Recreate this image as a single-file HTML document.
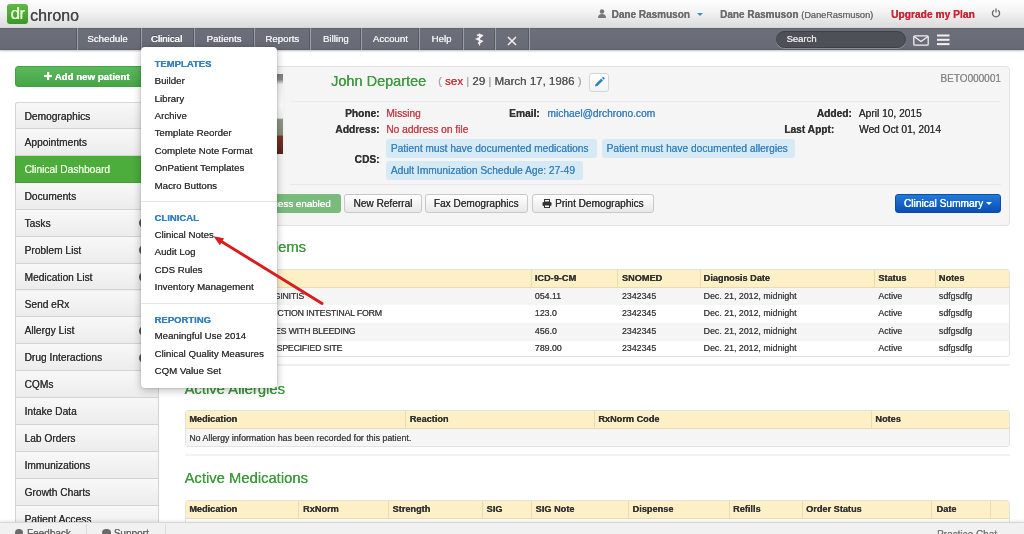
<!DOCTYPE html>
<html><head><meta charset="utf-8">
<style>
*{margin:0;padding:0;box-sizing:border-box}
html,body{width:1024px;height:534px;overflow:hidden;background:#fff;font-family:"Liberation Sans",sans-serif;color:#333;position:relative}
.a{position:absolute;white-space:nowrap}
.a>svg{display:block}
#wrap *{text-shadow:0.2px 0 0 currentColor}
#hdr{left:0;top:0;width:1024px;height:28px;background:linear-gradient(#fefefe,#f4f4f4 40%,#dadada)}
#logo{left:7px;top:3.6px;width:21px;height:20.8px;border-radius:3px;background:linear-gradient(#62b845,#3c962a);color:#e4ffd0;font-size:17px;line-height:19px;text-align:center;letter-spacing:-0.5px}
#chrono{left:30px;top:3.5px;font-size:16px;color:#454545;line-height:24px}
#nav{left:0;top:28px;width:1024px;height:21.5px;background:linear-gradient(#5e6069,#6c6f79 8%,#686b75 92%,#5a5c65);box-shadow:0 1px 2px rgba(0,0,0,.25)}
.sep{top:28px;width:2px;height:21.5px;border-left:1px solid #585a63;border-right:1px solid #9c9ea5}
.tab{top:28px;height:21.5px;line-height:22.4px;color:#eef0f4;font-size:9.7px;text-align:center;text-shadow:0 -1px 0 rgba(0,0,0,.3)}
.hr{top:8.7px;font-size:10px;color:#555;line-height:12px}
#side{left:14.5px;top:101.9px;width:144px;height:420px}
.si{position:absolute;left:0;width:144px;height:26.9px;border:1px solid #d3d3d3;border-top:none;background:linear-gradient(#f8f8f8,#ececec);font-size:10.2px;line-height:28.2px;padding-left:9px;color:#333}
.si.act{background:#4cac3c;color:#eaf7dd;border-color:#4a9a3c}

.dd{z-index:10;left:141px;top:46.7px;width:136.3px;height:341px;background:#fff;border-radius:4px;box-shadow:0 2px 8px rgba(0,0,0,.28),0 0 0 1px rgba(0,0,0,.06)}
.dh{z-index:11;font-size:9.5px;font-weight:bold;color:#3380c2;left:154.5px;line-height:11px}
.di{z-index:11;font-size:9.7px;color:#383838;left:154.5px;line-height:11px}
.dsep{z-index:11;left:141px;width:136px;height:1px;background:#e6e6e6}
#card{left:184.5px;top:66px;width:825px;height:159.5px;background:#f5f5f5;border:1px solid #e3e3e3;border-radius:4px}
.lb{font-size:10.2px;font-weight:bold;color:#333;text-align:right;line-height:12px}
.vl{font-size:10.2px;line-height:12px}
.cds{background:#d6eaf6;color:#3c84bd;font-size:10.2px;line-height:19px;height:19px;border-radius:3px;padding-left:5px}
.btn{top:194.2px;height:19px;border:1px solid #c8c8c8;border-radius:3px;background:linear-gradient(#fff,#e8e8e8);font-size:10.1px;line-height:18.6px;text-align:center;color:#333}
.sh{font-size:14.8px;color:#3d9a3d;line-height:16px}
.tb{left:184.5px;width:825px;border:1px solid #e2e2e2;border-radius:3px;background:#fff;overflow:hidden}
.th{position:absolute;left:0;top:0;width:100%;height:18px;background:#fdefc6;border-bottom:1px solid #eadcb0}
.tc{font-size:9.2px;font-weight:bold;color:#333;line-height:18px}
.tv{font-size:8.8px;color:#444;line-height:17.6px}
.vs{width:1px;background:#eadcb0}
</style></head><body><div id="wrap" style="position:absolute;left:0;top:0;width:1024px;height:534px;will-change:transform">
<div id="hdr" class="a"></div>
<div id="logo" class="a">dr</div>
<div id="chrono" class="a">chrono</div>
<div class="a hr" style="left:598px;top:9px;width:8px;height:9px">
<svg width="8" height="9" viewBox="0 0 8 9"><circle cx="4" cy="2.5" r="2.2" fill="#777"/><path d="M0 9 Q0 5 4 5 Q8 5 8 9Z" fill="#777"/></svg></div>
<div class="a hr" style="left:611.5px;font-weight:bold;color:#6c6c6c">Dane Rasmuson</div>
<div class="a" style="left:696.5px;top:12.5px;width:0;height:0;border-left:3px solid transparent;border-right:3px solid transparent;border-top:3px solid #3d8fc8"></div>
<div class="a hr" style="left:720px;font-weight:bold;color:#6c6c6c">Dane Rasmuson <span style="font-size:9.2px;font-weight:normal">(DaneRasmuson)</span></div>
<div class="a hr" style="left:891px;top:9px;font-size:10.25px;font-weight:bold;color:#cc2535">Upgrade my Plan</div>
<div class="a" style="left:991px;top:8px"><svg width="10" height="10" viewBox="0 0 10 10"><path d="M3 2.3 A3.6 3.6 0 1 0 7 2.3" fill="none" stroke="#666" stroke-width="1.3"/><line x1="5" y1="0.5" x2="5" y2="4.5" stroke="#666" stroke-width="1.3"/></svg></div>

<div id="nav" class="a"></div>
<div class="a sep" style="left:75.5px"></div>
<div class="a sep" style="left:139.5px"></div>
<div class="a sep" style="left:193px"></div>
<div class="a sep" style="left:252.5px"></div>
<div class="a sep" style="left:309px"></div>
<div class="a sep" style="left:359.7px"></div>
<div class="a sep" style="left:418px"></div>
<div class="a sep" style="left:462px"></div>
<div class="a sep" style="left:494.4px"></div>
<div class="a sep" style="left:527.8px"></div>
<div class="a tab" style="left:76px;width:63px">Schedule</div>
<div class="a tab" style="left:140.2px;width:52.5px;color:#fff;text-shadow:0.35px 0 0 #fff,0 -1px 0 rgba(0,0,0,.3)">Clinical</div>
<div class="a tab" style="left:195px;width:58px">Patients</div>
<div class="a tab" style="left:254.5px;width:55.5px">Reports</div>
<div class="a tab" style="left:311px;width:49.7px">Billing</div>
<div class="a tab" style="left:361.7px;width:57.3px">Account</div>
<div class="a tab" style="left:420px;width:43px">Help</div>


<div class="a" style="left:14.8px;top:65.6px;width:143.5px;height:21.5px;border-radius:3px;background:linear-gradient(#5cb85c,#47a447);border:1px solid #43a043;color:#fff;font-size:9.7px;font-weight:bold;line-height:19.5px;padding-left:28.5px"><svg width="8" height="8" viewBox="0 0 8 8" style="display:inline-block;vertical-align:-0.5px;margin-right:0"><rect x="3" y="0" width="2.2" height="8" fill="#fff"/><rect x="0" y="2.9" width="8" height="2.2" fill="#fff"/></svg> Add new patient</div>
<svg class="a" style="left:475px;top:32.5px" width="9" height="13" viewBox="0 0 9 13"><path d="M4.5 0.5 V12.5" stroke="#eee" stroke-width="1.3"/><path d="M2 2.5 Q4.5 1.2 7 2.6 Q4.5 5 2 6 Q4.5 7.2 7 8.2 Q5 9.8 3 10.3" fill="none" stroke="#f2f2f2" stroke-width="1.7"/></svg>
<svg class="a" style="left:507px;top:35.5px" width="10" height="10" viewBox="0 0 10 10"><path d="M1 1 L9 9 M9 1 L1 9" stroke="#f0f0f0" stroke-width="1.6"/></svg>
<div class="a" style="left:775.5px;top:31px;width:130px;height:16.5px;border-radius:9px;background:#4e5058;border:1px solid #3e4046;box-shadow:0 1px 0 rgba(255,255,255,.25);color:#e6e6e6;font-size:9.5px;line-height:14.5px;padding-left:10px">Search</div>
<svg class="a" style="left:913px;top:35px" width="16" height="11" viewBox="0 0 16 11"><rect x="0.8" y="0.8" width="14.4" height="9.4" rx="1" fill="none" stroke="#f0f0f0" stroke-width="1.3"/><path d="M1 1.5 L8 6.5 L15 1.5" fill="none" stroke="#f0f0f0" stroke-width="1.3"/></svg>
<svg class="a" style="left:937px;top:34px" width="13" height="12" viewBox="0 0 13 12"><rect x="0" y="0.5" width="12.5" height="2" fill="#f0f0f0"/><rect x="0" y="4.8" width="12.5" height="2" fill="#f0f0f0"/><rect x="0" y="9.1" width="12.5" height="2" fill="#f0f0f0"/></svg>
<div id="side" class="a">
<div class="a" style="left:0;top:0;width:144px;height:432px;border:1px solid #d3d3d3;border-radius:3px;background:#eee"></div>
<div class="si" style="top:0px;border-top:1px solid #d8d8d8;border-radius:3px 3px 0 0;line-height:27.2px">Demographics</div>
<div class="si" style="top:26.95px">Appointments</div>
<div class="si act" style="top:53.90px">Clinical Dashboard</div>
<div class="si" style="top:80.85px">Documents</div>
<div class="si" style="top:107.80px">Tasks</div>
<div class="a" style="left:124px;top:116.10px;width:16px;height:10px;border-radius:5px;background:#555"></div>
<div class="si" style="top:134.75px">Problem List</div>
<div class="a" style="left:124px;top:143.05px;width:16px;height:10px;border-radius:5px;background:#555"></div>
<div class="si" style="top:161.70px">Medication List</div>
<div class="a" style="left:124px;top:170.00px;width:16px;height:10px;border-radius:5px;background:#555"></div>
<div class="si" style="top:188.65px">Send eRx</div>
<div class="si" style="top:215.60px">Allergy List</div>
<div class="a" style="left:124px;top:223.90px;width:16px;height:10px;border-radius:5px;background:#555"></div>
<div class="si" style="top:242.55px">Drug Interactions</div>
<div class="a" style="left:124px;top:250.85px;width:16px;height:10px;border-radius:5px;background:#555"></div>
<div class="si" style="top:269.50px">CQMs</div>
<div class="si" style="top:296.45px">Intake Data</div>
<div class="si" style="top:323.40px">Lab Orders</div>
<div class="si" style="top:350.35px">Immunizations</div>
<div class="si" style="top:377.30px">Growth Charts</div>
<div class="si" style="top:404.25px">Patient Access</div>
</div>


<div id="card" class="a"></div>
<div class="a" style="left:203px;top:74px;width:79.8px;height:80.3px;background:linear-gradient(#7c7c7c 0,#8a8a8a 7%,#f4f4f4 13%,#fff 40%,#f2f2f2 55%,#8f9585 57%,#868c7b 76%,#7a3428 78%,#5c2219 100%)"></div>
<div class="a" style="left:290px;top:101px;width:711px;height:1px;background:#ececec"></div>
<div class="a" style="left:290px;top:184px;width:711px;height:1px;background:#e8e8e8"></div>
<div class="a sh" style="left:331px;top:73px;font-size:14.5px;line-height:16px">John Departee</div>
<div class="a" style="left:438px;top:75px;font-size:11.5px;color:#555;line-height:13px"><span style="color:#aaa">(</span> <span style="color:#c7353a">sex</span> <span style="color:#aaa">|</span> 29 <span style="color:#aaa">|</span> March 17, 1986 <span style="color:#aaa">)</span></div>
<div class="a" style="left:588.7px;top:73.3px;width:20px;height:18.8px;border:1px solid #d6d6d6;border-radius:3px;background:linear-gradient(#fff,#f3f3f3)"><svg width="18" height="17" viewBox="0 0 18 17" style="position:absolute;left:0;top:0"><path d="M5 12.5 L5.6 10.2 L11.2 4.6 L13 6.4 L7.4 12 Z" fill="#2d86c4"/><path d="M11.9 3.9 L12.7 3.1 Q13.2 2.7 13.7 3.1 L14.5 3.9 Q14.9 4.4 14.5 4.9 L13.7 5.7 Z" fill="#2d86c4"/></svg></div>
<div class="a" style="left:940.4px;top:73px;font-size:10px;color:#8a8a8a;line-height:12px">BETO000001</div>

<div class="a lb" style="left:300px;width:79.5px;top:107.5px">Phone:</div>
<div class="a vl" style="left:386.2px;top:107.5px;color:#c9414a">Missing</div>
<div class="a lb" style="left:300px;width:79.5px;top:124px">Address:</div>
<div class="a vl" style="left:386.2px;top:124px;color:#c9414a">No address on file</div>
<div class="a lb" style="left:300px;width:79.5px;top:154px">CDS:</div>
<div class="a lb" style="left:460px;width:79.7px;top:107.5px">Email:</div>
<div class="a vl" style="left:547.4px;top:107.5px;color:#3a7fc0">michael@drchrono.com</div>
<div class="a lb" style="left:772px;width:79.8px;top:107.5px">Added:</div>
<div class="a vl" style="left:858.8px;top:107.5px">April 10, 2015</div>
<div class="a lb" style="left:772px;width:62.2px;top:124px">Last Appt:</div>
<div class="a vl" style="left:859px;top:124px">Wed Oct 01, 2014</div>
<div class="a cds" style="left:385.8px;top:139px;width:211.2px">Patient must have documented medications</div>
<div class="a cds" style="left:601.5px;top:139px;width:193px">Patient must have documented allergies</div>
<div class="a cds" style="left:385.8px;top:160.5px;width:196.8px">Adult Immunization Schedule Age: 27-49</div>

<div class="a" style="left:200px;top:193.8px;width:140.7px;height:19.3px;background:#7abb7d;border-radius:3px;color:#fff;font-size:9.8px;line-height:19px;text-align:right;padding-right:10px">Patient Access enabled</div>
<div class="a btn" style="left:344px;width:77.8px">New Referral</div>
<div class="a btn" style="left:424.5px;width:103.3px">Fax Demographics</div>
<div class="a btn" style="left:532.3px;width:121.3px"><svg width="10" height="9" viewBox="0 0 10 9" style="display:inline-block;vertical-align:-1px"><rect x="2.5" y="0.5" width="5" height="2.5" fill="none" stroke="#333" stroke-width="1"/><rect x="0.5" y="3" width="9" height="4" rx="1" fill="#333"/><rect x="2.5" y="6" width="5" height="2.5" fill="#fff" stroke="#333" stroke-width="1"/></svg> Print Demographics</div>
<div class="a" style="left:894.8px;top:194px;width:106px;height:19px;border:1px solid #0b4ea8;border-radius:3px;background:linear-gradient(#1f7ad9,#0a4fb3);color:#fff;font-size:10.2px;line-height:17px;text-align:center;text-shadow:0.4px 0 0 #fff">Clinical Summary <span style="display:inline-block;width:0;height:0;border-left:3px solid transparent;border-right:3px solid transparent;border-top:3px solid #fff;vertical-align:2px"></span></div>

<div class="a sh" style="right:718px;top:239px">Active Problems</div>
<div class="a tb" style="top:268.9px;height:88.6px">
 <div class="th"></div>
 <div class="a" style="left:0;top:18px;width:100%;height:17.6px;background:#f5f5f5"></div>
 <div class="a" style="left:0;top:53.2px;width:100%;height:17.6px;background:#f5f5f5"></div>
</div>
<div class="a tc" style="left:189.2px;top:268.9px">Name</div>
<div class="a vs" style="left:530.8px;top:269.9px;height:18px"></div>
<div class="a tc" style="left:534.8px;top:268.9px">ICD-9-CM</div>
<div class="a vs" style="left:617.4px;top:269.9px;height:18px"></div>
<div class="a tc" style="left:621.9px;top:268.9px">SNOMED</div>
<div class="a vs" style="left:699.6px;top:269.9px;height:18px"></div>
<div class="a tc" style="left:703.6px;top:268.9px">Diagnosis Date</div>
<div class="a vs" style="left:874.3px;top:269.9px;height:18px"></div>
<div class="a tc" style="left:878.3px;top:268.9px">Status</div>
<div class="a vs" style="left:934.9px;top:269.9px;height:18px"></div>
<div class="a tc" style="left:938.8px;top:268.9px">Notes</div>
<div class="a tv" style="right:720.1px;top:287.5px;letter-spacing:-0.2px">ACUTE VAGINITIS</div>
<div class="a tv" style="left:534.8px;top:287.5px">054.11</div>
<div class="a tv" style="left:621.9px;top:287.5px">2342345</div>
<div class="a tv" style="left:703.6px;top:287.5px">Dec. 21, 2012, midnight</div>
<div class="a tv" style="left:878.3px;top:287.5px">Active</div>
<div class="a tv" style="left:938.8px;top:287.5px">sdfgsdfg</div>
<div class="a tv" style="right:642.2px;top:305.1px;letter-spacing:-0.2px">INTUSSUSCEPTION OBSTRUCTION INTESTINAL FORM</div>
<div class="a tv" style="left:534.8px;top:305.1px">123.0</div>
<div class="a tv" style="left:621.9px;top:305.1px">2342345</div>
<div class="a tv" style="left:703.6px;top:305.1px">Dec. 21, 2012, midnight</div>
<div class="a tv" style="left:878.3px;top:305.1px">Active</div>
<div class="a tv" style="left:938.8px;top:305.1px">sdfgsdfg</div>
<div class="a tv" style="right:668.7px;top:322.7px;letter-spacing:-0.2px">ESOPHAGEAL VARICES WITH BLEEDING</div>
<div class="a tv" style="left:534.8px;top:322.7px">456.0</div>
<div class="a tv" style="left:621.9px;top:322.7px">2342345</div>
<div class="a tv" style="left:703.6px;top:322.7px">Dec. 21, 2012, midnight</div>
<div class="a tv" style="left:878.3px;top:322.7px">Active</div>
<div class="a tv" style="left:938.8px;top:322.7px">sdfgsdfg</div>
<div class="a tv" style="right:681.9px;top:340.3px;letter-spacing:-0.2px">TUMOR OF UNSPECIFIED SITE</div>
<div class="a tv" style="left:534.8px;top:340.3px">789.00</div>
<div class="a tv" style="left:621.9px;top:340.3px">2342345</div>
<div class="a tv" style="left:703.6px;top:340.3px">Dec. 21, 2012, midnight</div>
<div class="a tv" style="left:878.3px;top:340.3px">Active</div>
<div class="a tv" style="left:938.8px;top:340.3px">sdfgsdfg</div>
<div class="a sh" style="left:184.5px;top:381px">Active Allergies</div>
<div class="a tb" style="top:410.2px;height:37px"><div class="th"></div><div class="a" style="left:0;top:18px;width:100%;height:18px;background:#f5f5f5"></div></div>
<div class="a tc" style="left:189.2px;top:410.2px">Medication</div>
<div class="a vs" style="left:405.4px;top:411.2px;height:18px"></div>
<div class="a tc" style="left:409.7px;top:410.2px">Reaction</div>
<div class="a vs" style="left:593.9px;top:411.2px;height:18px"></div>
<div class="a tc" style="left:598.2px;top:410.2px">RxNorm Code</div>
<div class="a vs" style="left:870.5px;top:411.2px;height:18px"></div>
<div class="a tc" style="left:875.3px;top:410.2px">Notes</div>
<div class="a tv" style="left:189.2px;top:428.5px;line-height:18px">No Allergy information has been recorded for this patient.</div>
<div class="a sh" style="left:184.5px;top:470px">Active Medications</div>
<div class="a tb" style="top:500.2px;height:40px"><div class="th"></div></div>
<div class="a tc" style="left:189.2px;top:500.2px">Medication</div>
<div class="a vs" style="left:298.4px;top:501.2px;height:18px"></div>
<div class="a tc" style="left:303px;top:500.2px">RxNorm</div>
<div class="a vs" style="left:388.2px;top:501.2px;height:18px"></div>
<div class="a tc" style="left:392.5px;top:500.2px">Strength</div>
<div class="a vs" style="left:482.3px;top:501.2px;height:18px"></div>
<div class="a tc" style="left:486.6px;top:500.2px">SIG</div>
<div class="a vs" style="left:530.9px;top:501.2px;height:18px"></div>
<div class="a tc" style="left:535.6px;top:500.2px">SIG Note</div>
<div class="a vs" style="left:627.7px;top:501.2px;height:18px"></div>
<div class="a tc" style="left:632.5px;top:500.2px">Dispense</div>
<div class="a vs" style="left:728.7px;top:501.2px;height:18px"></div>
<div class="a tc" style="left:733px;top:500.2px">Refills</div>
<div class="a vs" style="left:801.6px;top:501.2px;height:18px"></div>
<div class="a tc" style="left:806px;top:500.2px">Order Status</div>
<div class="a vs" style="left:931.3px;top:501.2px;height:18px"></div>
<div class="a tc" style="left:936.5px;top:500.2px">Date</div>
<div class="a vs" style="left:990.2px;top:501.2px;height:18px"></div>
<div class="a tc" style="left:994px;top:500.2px"></div>
<div class="a" style="left:0;top:522px;width:1024px;height:12px;background:#f1f1f1;border-top:1px solid #d8d8d8;box-shadow:0 -1px 3px rgba(0,0,0,.1)"></div>
<div class="a" style="left:14.8px;top:528.6px;width:8.5px;height:8.5px;border-radius:50%;background:#6a6a6a"></div><div class="a" style="left:26.9px;top:527.5px;font-size:10px;color:#666;line-height:12px">Feedback</div>
<div class="a" style="left:102.3px;top:528.6px;width:8.5px;height:8.5px;border-radius:50%;background:#6a6a6a"></div><div class="a" style="left:113.7px;top:527.5px;font-size:10px;color:#666;line-height:12px">Support</div>
<div class="a" style="left:85.5px;top:524px;width:1px;height:10px;background:#dcdcdc"></div>
<div class="a" style="left:165px;top:524px;width:1px;height:10px;background:#dcdcdc"></div>
<div class="a" style="left:937px;top:529px;font-size:10px;color:#777;line-height:12px">Practice Chat</div>
<div class="a dd"></div>
<div class="a dh" style="top:58.0px">TEMPLATES</div>
<div class="a di" style="top:75.0px">Builder</div>
<div class="a di" style="top:92.5px">Library</div>
<div class="a di" style="top:109.9px">Archive</div>
<div class="a di" style="top:127.3px">Template Reorder</div>
<div class="a di" style="top:144.7px">Complete Note Format</div>
<div class="a di" style="top:162.1px">OnPatient Templates</div>
<div class="a di" style="top:179.5px">Macro Buttons</div>
<div class="a dh" style="top:211.9px">CLINICAL</div>
<div class="a di" style="top:229.0px">Clinical Notes</div>
<div class="a di" style="top:246.4px">Audit Log</div>
<div class="a di" style="top:263.9px">CDS Rules</div>
<div class="a di" style="top:281.0px">Inventory Management</div>
<div class="a dh" style="top:314.1px">REPORTING</div>
<div class="a di" style="top:330.3px">Meaningful Use 2014</div>
<div class="a di" style="top:347.9px">Clinical Quality Measures</div>
<div class="a di" style="top:365.3px">CQM Value Set</div>
<div class="a dsep" style="top:200.5px"></div>
<div class="a dsep" style="top:302.5px"></div>
<svg class="a" style="left:0;top:0;z-index:20" width="1024" height="534"><line x1="322.1" y1="303.5" x2="219" y2="240" stroke="#d81d1d" stroke-width="2.9" stroke-linecap="round"/><polygon points="213.5,236.3 224,238.2 219.8,245.2" fill="#d81d1d"/></svg>
<div class="a" style="left:184.5px;top:364px;width:825px;height:1.5px;background:#f0f0f0"></div>
<div class="a" style="left:184.5px;top:454px;width:825px;height:2px;background:#f2f2f2"></div>
</div></body></html>
